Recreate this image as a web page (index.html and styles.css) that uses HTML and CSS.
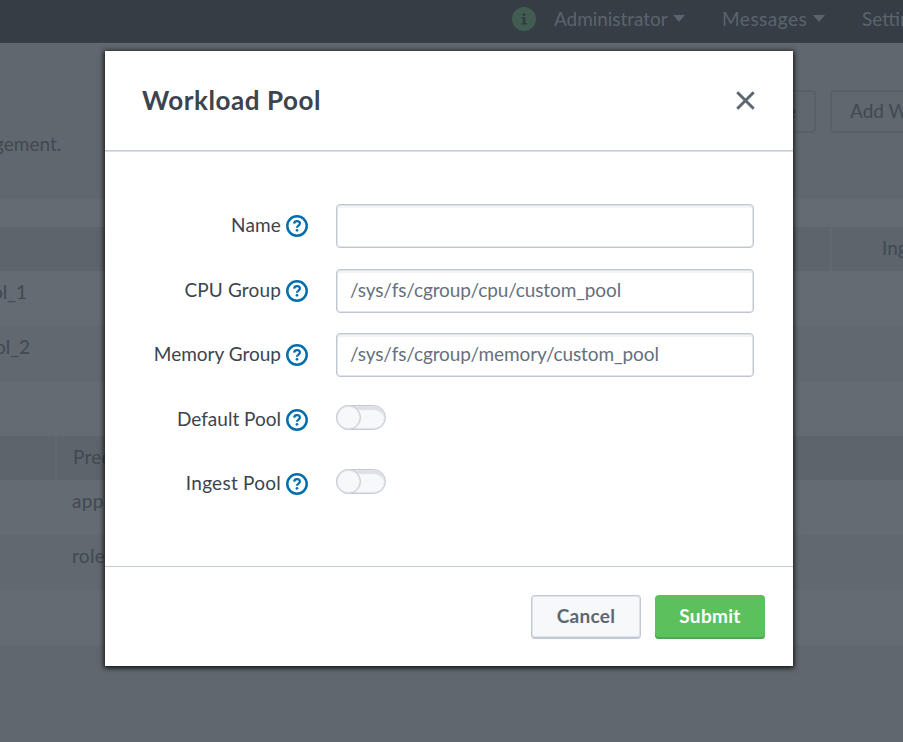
FILE: index.html
```html
<!DOCTYPE html>
<html lang="en">
<head>
<meta charset="utf-8">
<title>Workload Management</title>
<link rel="stylesheet" href="styles.css">
</head>
<body>
<svg width="0" height="0" class="defs">
  <symbol id="help" viewBox="0 0 22 22">
    <circle cx="11" cy="11" r="9.700" fill="none" stroke="#006eaa" stroke-width="2.500"/>
    <path d="M8.100 8.700C8.300 7 9.400 6.200 11 6.200c1.700 0 2.900.9 2.900 2.400 0 2-2.900 2.100-2.900 4.200" fill="none" stroke="#006eaa" stroke-width="2.200"/>
    <circle cx="11" cy="15.300" r="1.350" fill="#006eaa"/>
  </symbol>
</svg>
<div class="page">
  <nav class="nav">
    <svg class="info" viewBox="0 0 24 24"><circle cx="12" cy="12" r="12" fill="#415c50"/><circle cx="12" cy="7.400" r="1.500" fill="#343c43"/><path d="M9.500 10h3.900v6h1.500v1.500H9.300V16h1.500v-4.500H9.500z" fill="#343c43"/></svg>
    <span class="nav-item admin">Administrator</span><i class="caret"></i>
    <span class="nav-item messages">Messages</span><i class="caret"></i>
    <span class="nav-item settings">Settings</span>
  </nav>
  <header class="intro">
    <div class="desc">gement.</div>
    <div class="actions"><span class="ghost first">e</span><span class="ghost">Add Workload Rule</span></div>
  </header>
  <main class="tables">
    <div class="row head"><span class="cell wide"></span><span class="cell ingest">Ingest</span></div>
    <div class="row"><span class="pool one">ol_1</span></div>
    <div class="row alt"><span class="pool">ol_2</span></div>
    <div class="row blank"></div>
    <div class="row head"><span class="cell narrow"></span><span class="cell pred">Pred</span></div>
    <div class="row"><span class="rule">app</span></div>
    <div class="row alt"><span class="rule">role</span></div>
    <div class="row blank"></div>
  </main>
</div>
<section class="modal">
  <header class="modal-head">
    <h1>Workload Pool</h1>
    <svg class="close" viewBox="0 0 18 18"><path d="M1.200 1.200l15.600 15.600M16.800 1.200l-15.600 15.600" stroke="#5c6773" stroke-width="2.800"/></svg>
  </header>
  <div class="form">
    <div class="field"><label class="l-name">Name</label><svg class="help"><use href="#help"/></svg><div class="input"></div></div>
    <div class="field"><label class="l-cpu">CPU Group</label><svg class="help"><use href="#help"/></svg><div class="input"><span class="placeholder">/sys/fs/cgroup/cpu/custom_pool</span></div></div>
    <div class="field"><label>Memory Group</label><svg class="help"><use href="#help"/></svg><div class="input"><span class="placeholder">/sys/fs/cgroup/memory/custom_pool</span></div></div>
    <div class="field"><label>Default Pool</label><svg class="help"><use href="#help"/></svg><div class="toggle"><i></i></div></div>
    <div class="field"><label class="l-ing">Ingest Pool</label><svg class="help"><use href="#help"/></svg><div class="toggle"><i></i></div></div>
  </div>
  <footer class="modal-foot">
    <button class="btn cancel">Cancel</button>
    <button class="btn submit">Submit</button>
  </footer>
</section>
</body>
</html>
```
FILE: styles.css
```css
* { box-sizing: border-box; }
body { margin: 0; width: 903px; height: 742px; overflow: hidden; font-family: Lato, "Liberation Sans", sans-serif; font-size: 19px; line-height: 24px; color: #3c444d; }
.defs { display: block; }
.page { height: 742px; overflow: hidden; background: #60676e; color: #414951; white-space: nowrap; }
.nav { height: 43px; background: #363d45; border-bottom: 1px solid #3b4249; color: #5b646d; display: flex; align-items: center; padding: 0 0 5px 512px; }
.info { width: 24px; height: 24px; margin-right: 18px; flex: none; }
.nav-item { flex: none; }
.admin { width: 114px; letter-spacing: -.05px; }
.messages { width: 86px; letter-spacing: .5px; }
.caret { flex: none; border: 6px solid transparent; border-top: 7px solid #5b646d; border-bottom: 0; margin: 0 37px 0 5px; }
.intro { height: 156px; display: flex; justify-content: space-between; }
.desc { width: 70px; padding-top: 89px; margin-left: -6px; }
.actions { display: flex; gap: 14px; padding-top: 47px; width: 153px; }
.ghost { height: 43px; flex: none; border: 2px solid #596067; border-radius: 4px; padding: 7px 18px; }
.ghost.first { width: 66px; text-align: right; }
.tables { background: #646b72; padding-top: 28px; }
.row { height: 55px; display: flex; align-items: center; overflow: hidden; }
.row.head { height: 44px; background: #5d646b; }
.row.alt { background: #61686f; }
.cell { height: 44px; flex: none; padding-top: 9px; }
.cell.wide { width: 832px; border-right: 2px solid #61686f; }
.ingest { padding-left: 50px; }
.cell.narrow { width: 57px; border-right: 2px solid #61686f; }
.pred { padding-left: 16px; letter-spacing: .2px; }
.pool { margin-left: -5px; margin-top: -13px; }
.pool.one { margin-left: -8px; }
.rule { margin-left: 72px; margin-top: -13px; letter-spacing: .3px; }
.modal { position: absolute; left: 105px; top: 51px; width: 688px; height: 615px; background: #fff; box-shadow: 0 1px 5px 1px rgba(0,0,0,.85); display: flex; flex-direction: column; }
.modal-head { height: 101px; flex: none; border-bottom: 1px solid #dbdfe7; box-shadow: inset 0 -1px 0 #c6ccd8; display: flex; align-items: center; justify-content: space-between; padding: 0 38px 2px 37px; }
h1 { margin: -1px 0 0; font-size: 26px; line-height: 32px; font-weight: 700; letter-spacing: .55px; }
.close { width: 19px; height: 19px; }
.form { height: 414px; flex: none; padding-top: 52px; }
.field { height: 64.6px; display: flex; align-items: flex-start; }
label { width: 176px; padding-top: 9px; text-align: right; white-space: nowrap; }
.l-name, .l-cpu { letter-spacing: .15px; }
.l-ing { letter-spacing: .25px; }
.help { width: 22px; height: 22px; margin: 11px 28px 0 5px; flex: none; }
.input { width: 418px; height: 44px; border: 1px solid #c0c7d2; border-radius: 4px; box-shadow: inset 0 0 0 1px #e1e5ea, inset 0 3px 1px #f3f4f6; padding: 8px 13px; color: #65707c; white-space: nowrap; }
.placeholder { letter-spacing: -.11px; }
.toggle { width: 50px; height: 25px; margin-top: 7px; border: 1px solid #c3cad5; border-radius: 13px; background: #f7f8fa; box-shadow: inset 0 0 0 1px #e1e5ea, inset 0 4px 1px #dde0e5; }
.toggle i { display: block; width: 25px; height: 25px; margin: -1px 0 0 -1px; border: 1px solid #c3cad5; border-radius: 50%; background: #f7f8fa; box-shadow: inset 0 0 0 1px #e6e9ee; }
.modal-foot { height: 100px; border-top: 1px solid #c3cbd8; display: flex; justify-content: flex-end; gap: 14px; padding: 28px 28px 0 0; }
.btn { width: 110px; height: 44px; padding: 0 0 2px; border-radius: 4px; font: 700 19px/24px Lato, "Liberation Sans", sans-serif; letter-spacing: .3px; }
.cancel { color: #5c6773; background: #f7f8fa; border: 1px solid #c3cad5; border-bottom-width: 2px; box-shadow: inset 0 0 0 1px #dfe3e9; }
.submit { color: #fff; background: #5cc05c; border: 0; padding-bottom: 3px; box-shadow: inset 0 -2px 0 #4fa84f; }
```
